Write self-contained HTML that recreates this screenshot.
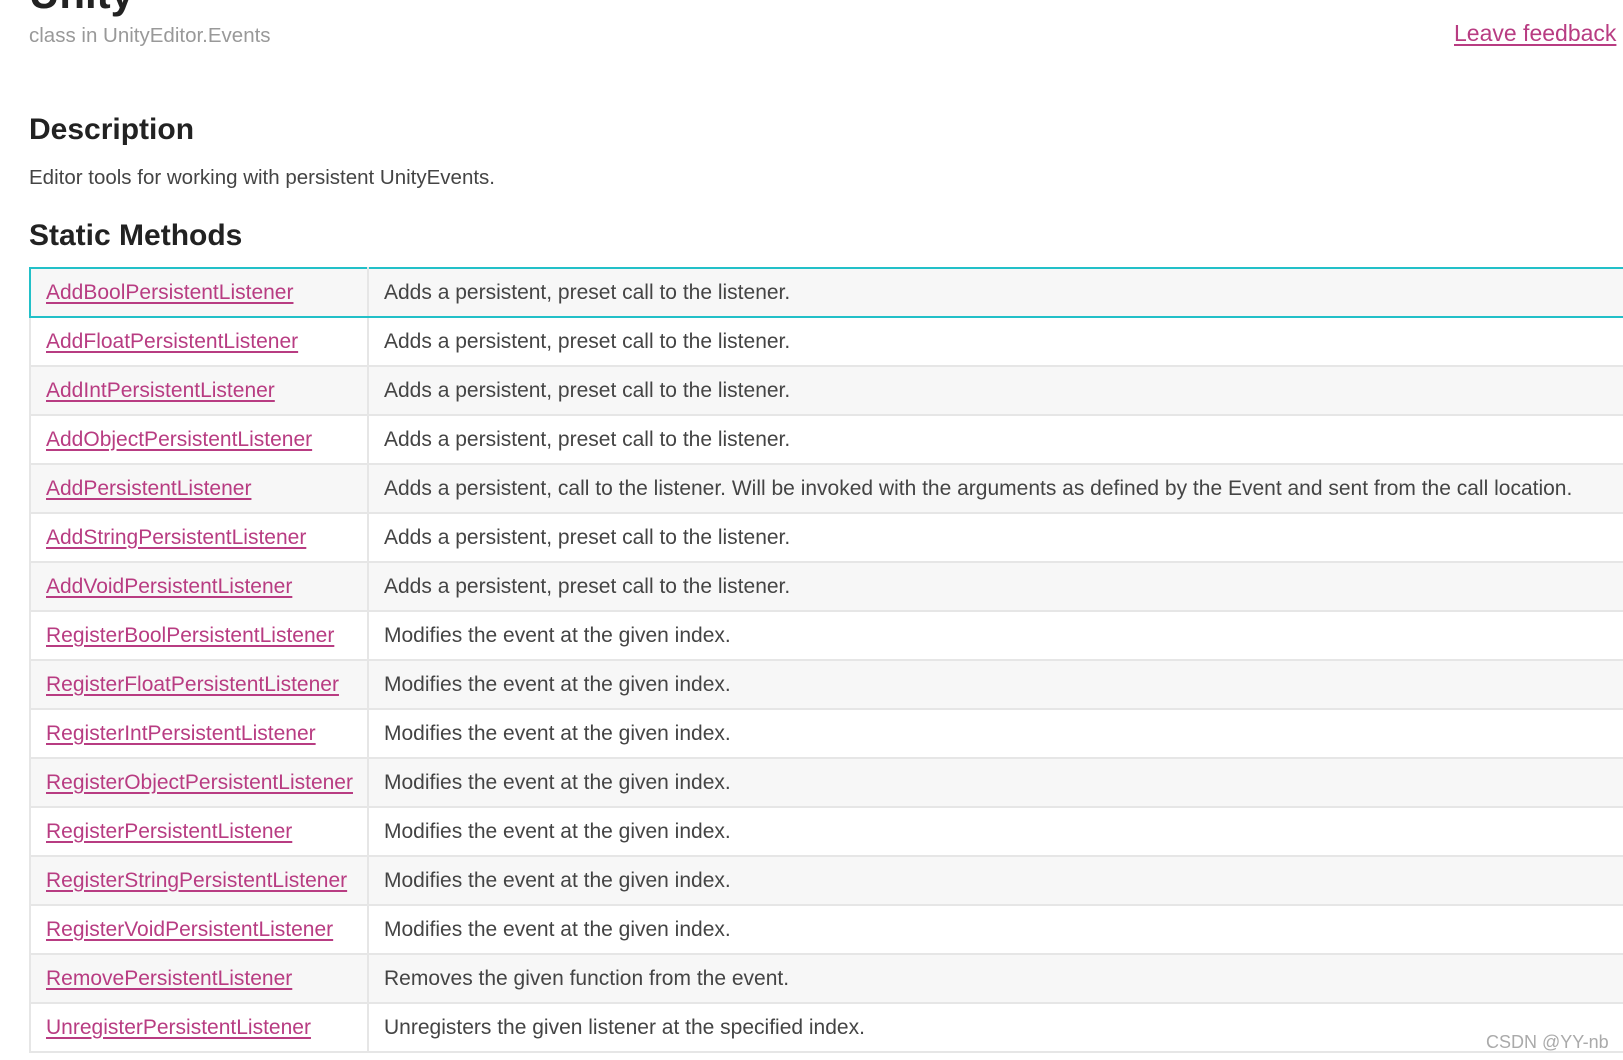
<!DOCTYPE html>
<html><head><meta charset="utf-8"><style>
body{margin:0;background:#fff;font-family:"Liberation Sans",sans-serif;width:1623px;height:1060px;overflow:hidden;position:relative;color:#333}
a{color:#b83c82;text-decoration:underline;text-decoration-thickness:2px;text-underline-offset:3px}
.top{position:absolute;top:-30px;left:29px;font-size:42px;font-weight:bold;color:#222}
.cls{position:absolute;top:24px;left:29px;font-size:20.5px;color:#999}
.fb{position:absolute;top:20px;left:1454px;font-size:23px}
h2{position:absolute;left:29px;margin:0;font-weight:bold;color:#222;font-size:30px}
.desc{position:absolute;left:29px;top:166px;font-size:20.5px;color:#444}
table{position:absolute;left:29px;top:267px;border-collapse:collapse;width:1640px}
td{height:47px;border:2px solid #e6e6e6;font-size:21px;padding:0 0 0 15px;color:#444;white-space:nowrap}
td.n{width:321px}
tr:nth-child(odd) td{background:#f7f7f7}
tr:first-child td{border-top:2px solid #22c0c8;border-bottom:2px solid #22c0c8}
tr:first-child td.n{border-left:2px solid #22c0c8}
.wm{position:absolute;left:1486px;top:1032px;font-size:18px;color:#aaa}
</style></head><body>
<div class="top">Unity</div>
<div class="cls">class in UnityEditor.Events</div>
<a class="fb">Leave feedback</a>
<h2 style="top:113px">Description</h2>
<div class="desc">Editor tools for working with persistent UnityEvents.</div>
<h2 style="top:219px">Static Methods</h2>
<table>
<tr><td class="n"><a>AddBoolPersistentListener</a></td><td>Adds a persistent, preset call to the listener.</td></tr>
<tr><td class="n"><a>AddFloatPersistentListener</a></td><td>Adds a persistent, preset call to the listener.</td></tr>
<tr><td class="n"><a>AddIntPersistentListener</a></td><td>Adds a persistent, preset call to the listener.</td></tr>
<tr><td class="n"><a>AddObjectPersistentListener</a></td><td>Adds a persistent, preset call to the listener.</td></tr>
<tr><td class="n"><a>AddPersistentListener</a></td><td>Adds a persistent, call to the listener. Will be invoked with the arguments as defined by the Event and sent from the call location.</td></tr>
<tr><td class="n"><a>AddStringPersistentListener</a></td><td>Adds a persistent, preset call to the listener.</td></tr>
<tr><td class="n"><a>AddVoidPersistentListener</a></td><td>Adds a persistent, preset call to the listener.</td></tr>
<tr><td class="n"><a>RegisterBoolPersistentListener</a></td><td>Modifies the event at the given index.</td></tr>
<tr><td class="n"><a>RegisterFloatPersistentListener</a></td><td>Modifies the event at the given index.</td></tr>
<tr><td class="n"><a>RegisterIntPersistentListener</a></td><td>Modifies the event at the given index.</td></tr>
<tr><td class="n"><a>RegisterObjectPersistentListener</a></td><td>Modifies the event at the given index.</td></tr>
<tr><td class="n"><a>RegisterPersistentListener</a></td><td>Modifies the event at the given index.</td></tr>
<tr><td class="n"><a>RegisterStringPersistentListener</a></td><td>Modifies the event at the given index.</td></tr>
<tr><td class="n"><a>RegisterVoidPersistentListener</a></td><td>Modifies the event at the given index.</td></tr>
<tr><td class="n"><a>RemovePersistentListener</a></td><td>Removes the given function from the event.</td></tr>
<tr><td class="n"><a>UnregisterPersistentListener</a></td><td>Unregisters the given listener at the specified index.</td></tr>
</table>
<div class="wm">CSDN @YY-nb</div>
</body></html>
